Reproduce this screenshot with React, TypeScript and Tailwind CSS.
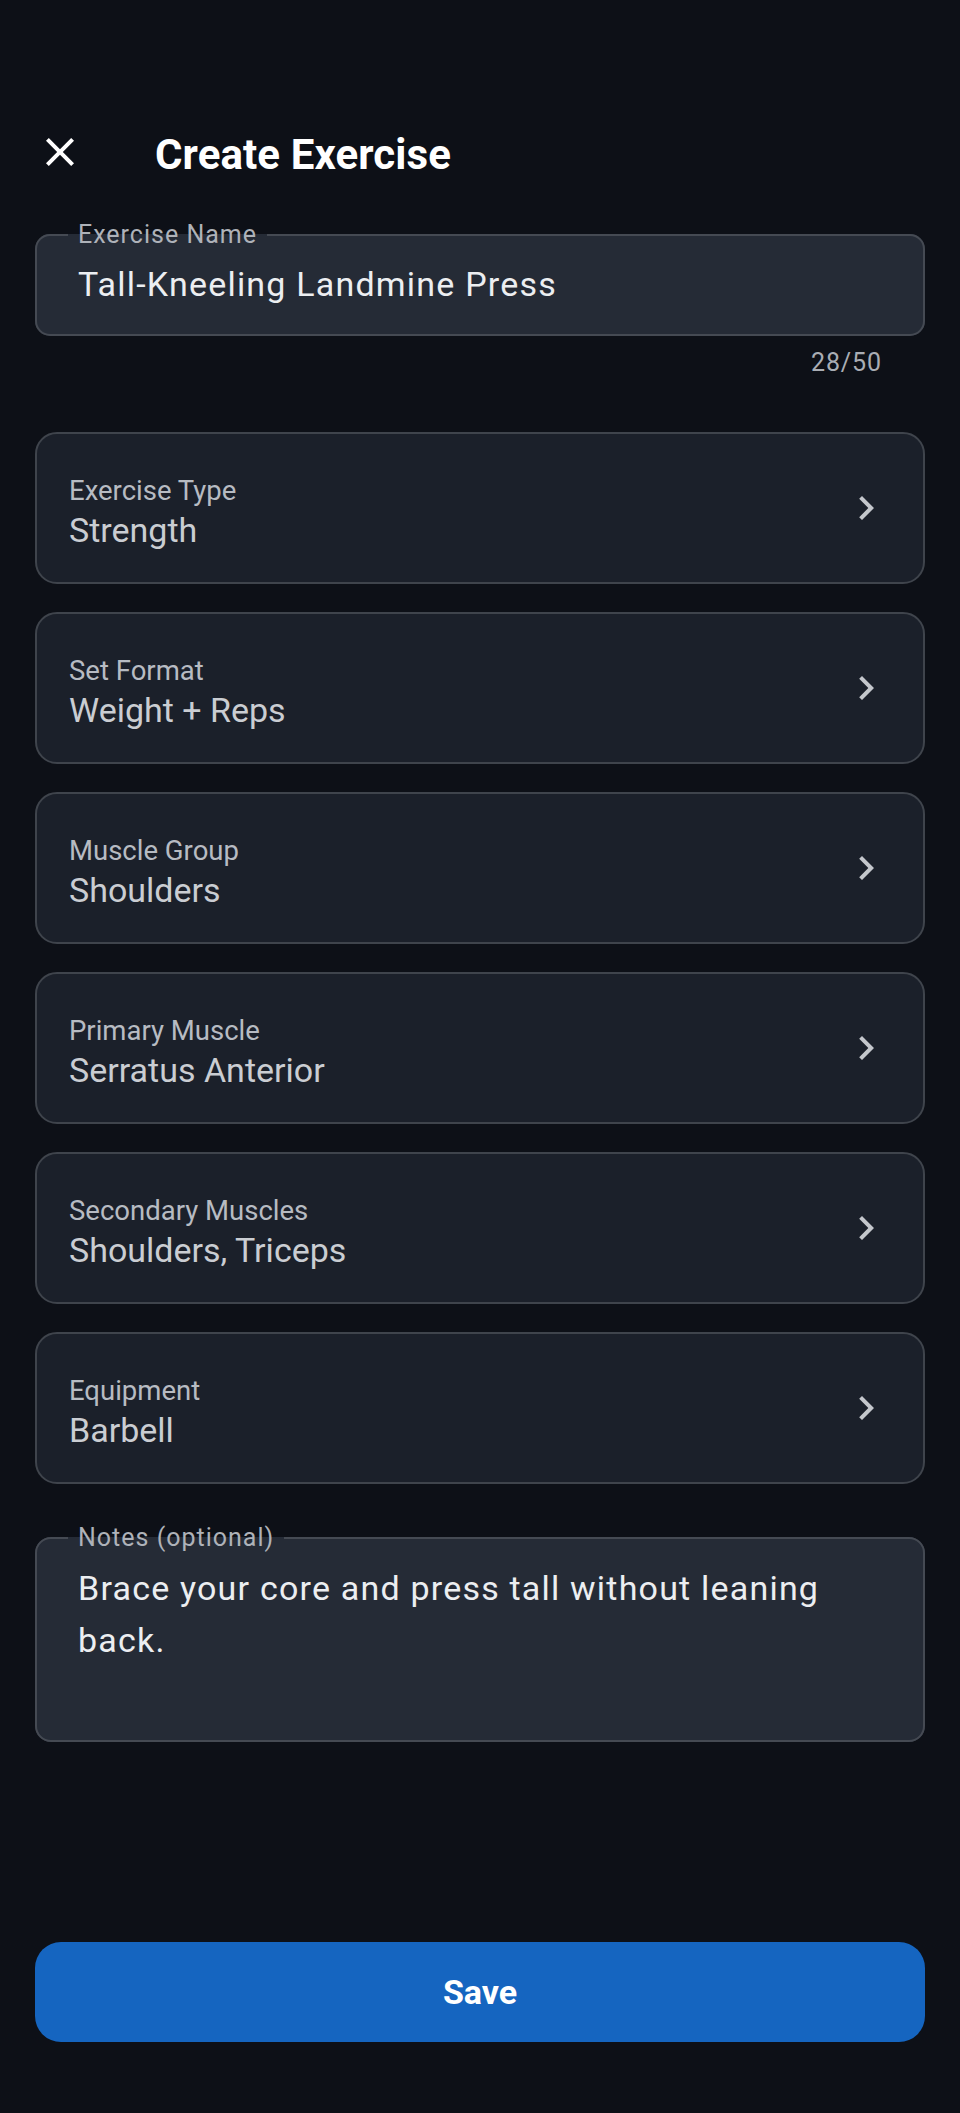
import React from "react";

const rows = [
  { label: "Exercise Type", value: "Strength" },
  { label: "Set Format", value: "Weight + Reps" },
  { label: "Muscle Group", value: "Shoulders" },
  { label: "Primary Muscle", value: "Serratus Anterior" },
  { label: "Secondary Muscles", value: "Shoulders, Triceps" },
  { label: "Equipment", value: "Barbell" },
];

function CloseIcon() {
  return (
    <svg viewBox="0 0 24 24" className="w-[48px] h-[48px]" fill="currentColor">
      <path d="M19 6.41L17.59 5 12 10.59 6.41 5 5 6.41 10.59 12 5 17.59 6.41 19 12 13.41 17.59 19 19 17.59 13.41 12z" />
    </svg>
  );
}

function ChevronIcon() {
  return (
    <svg viewBox="0 0 24 24" className="w-[48px] h-[48px] shrink-0" fill="currentColor">
      <path d="M10 6L8.59 7.41 13.17 12l-4.58 4.59L10 18l6-6z" />
    </svg>
  );
}

export default function App() {
  return (
    <div className="w-full h-[2113px] bg-[#0d1017] font-['Roboto',sans-serif] flex flex-col px-[35px] pt-[128px] pb-[71px]">
      {/* Header */}
      <div className="flex items-center h-[48px]">
        <button className="w-[48px] h-[48px] ml-[1px] text-white flex items-center justify-center">
          <CloseIcon />
        </button>
        <h1 className="ml-[71px] pt-[5px] text-[42px] leading-[48px] font-bold tracking-[0.1px] text-white">
          Create Exercise
        </h1>
      </div>

      {/* Exercise Name */}
      <fieldset className="mt-[45px] w-full border-2 border-[#454a53] rounded-[15px] bg-[#252b36] pl-[31px] pr-[41px] pt-[15px] pb-[30px]">
        <legend className="px-[10px] text-[25px] leading-[28px] tracking-[1px] text-[#aeb2b9]">
          Exercise Name
        </legend>
        <div className="pl-[10px] text-[34px] leading-[40px] tracking-[1.2px] text-[#eceef1]">
          Tall-Kneeling Landmine Press
        </div>
      </fieldset>
      <div className="mt-[12px] pr-[43px] text-right text-[25px] leading-[30px] tracking-[0.9px] text-[#a9adb4]">
        28/50
      </div>

      {/* Selection cards */}
      <div className="mt-[54px] flex flex-col gap-[28px]">
        {rows.map((r) => (
          <div
            key={r.label}
            className="h-[152px] flex items-center border-2 border-[#3f444c] rounded-[22px] bg-[#1b202a] pl-[32px] pr-[33px]"
          >
            <div className="flex-1 flex flex-col pt-[8px]">
              <span className="text-[27.5px] leading-[36px] text-[#b7bbc2]">{r.label}</span>
              <span className="text-[34px] leading-[42px] text-[#cacdd2]">{r.value}</span>
            </div>
            <span className="text-[#c4c7cc]">
              <ChevronIcon />
            </span>
          </div>
        ))}
      </div>

      {/* Notes */}
      <fieldset className="mt-[40px] w-full border-2 border-[#454a53] rounded-[16px] bg-[#252b36] pl-[31px] pr-[41px] pt-[9.5px] pb-[74px]">
        <legend className="px-[10px] text-[25px] leading-[28px] tracking-[1px] text-[#aeb2b9]">
          Notes (optional)
        </legend>
        <div className="pl-[10px] text-[34px] leading-[52px] tracking-[1.2px] text-[#eceef1]">
          Brace your core and press tall without leaning back.
        </div>
      </fieldset>

      {/* Save */}
      <button className="mt-auto h-[100px] w-full rounded-[26px] bg-[#1565c0] text-white text-[34px] font-bold flex items-center justify-center">
        Save
      </button>
    </div>
  );
}
